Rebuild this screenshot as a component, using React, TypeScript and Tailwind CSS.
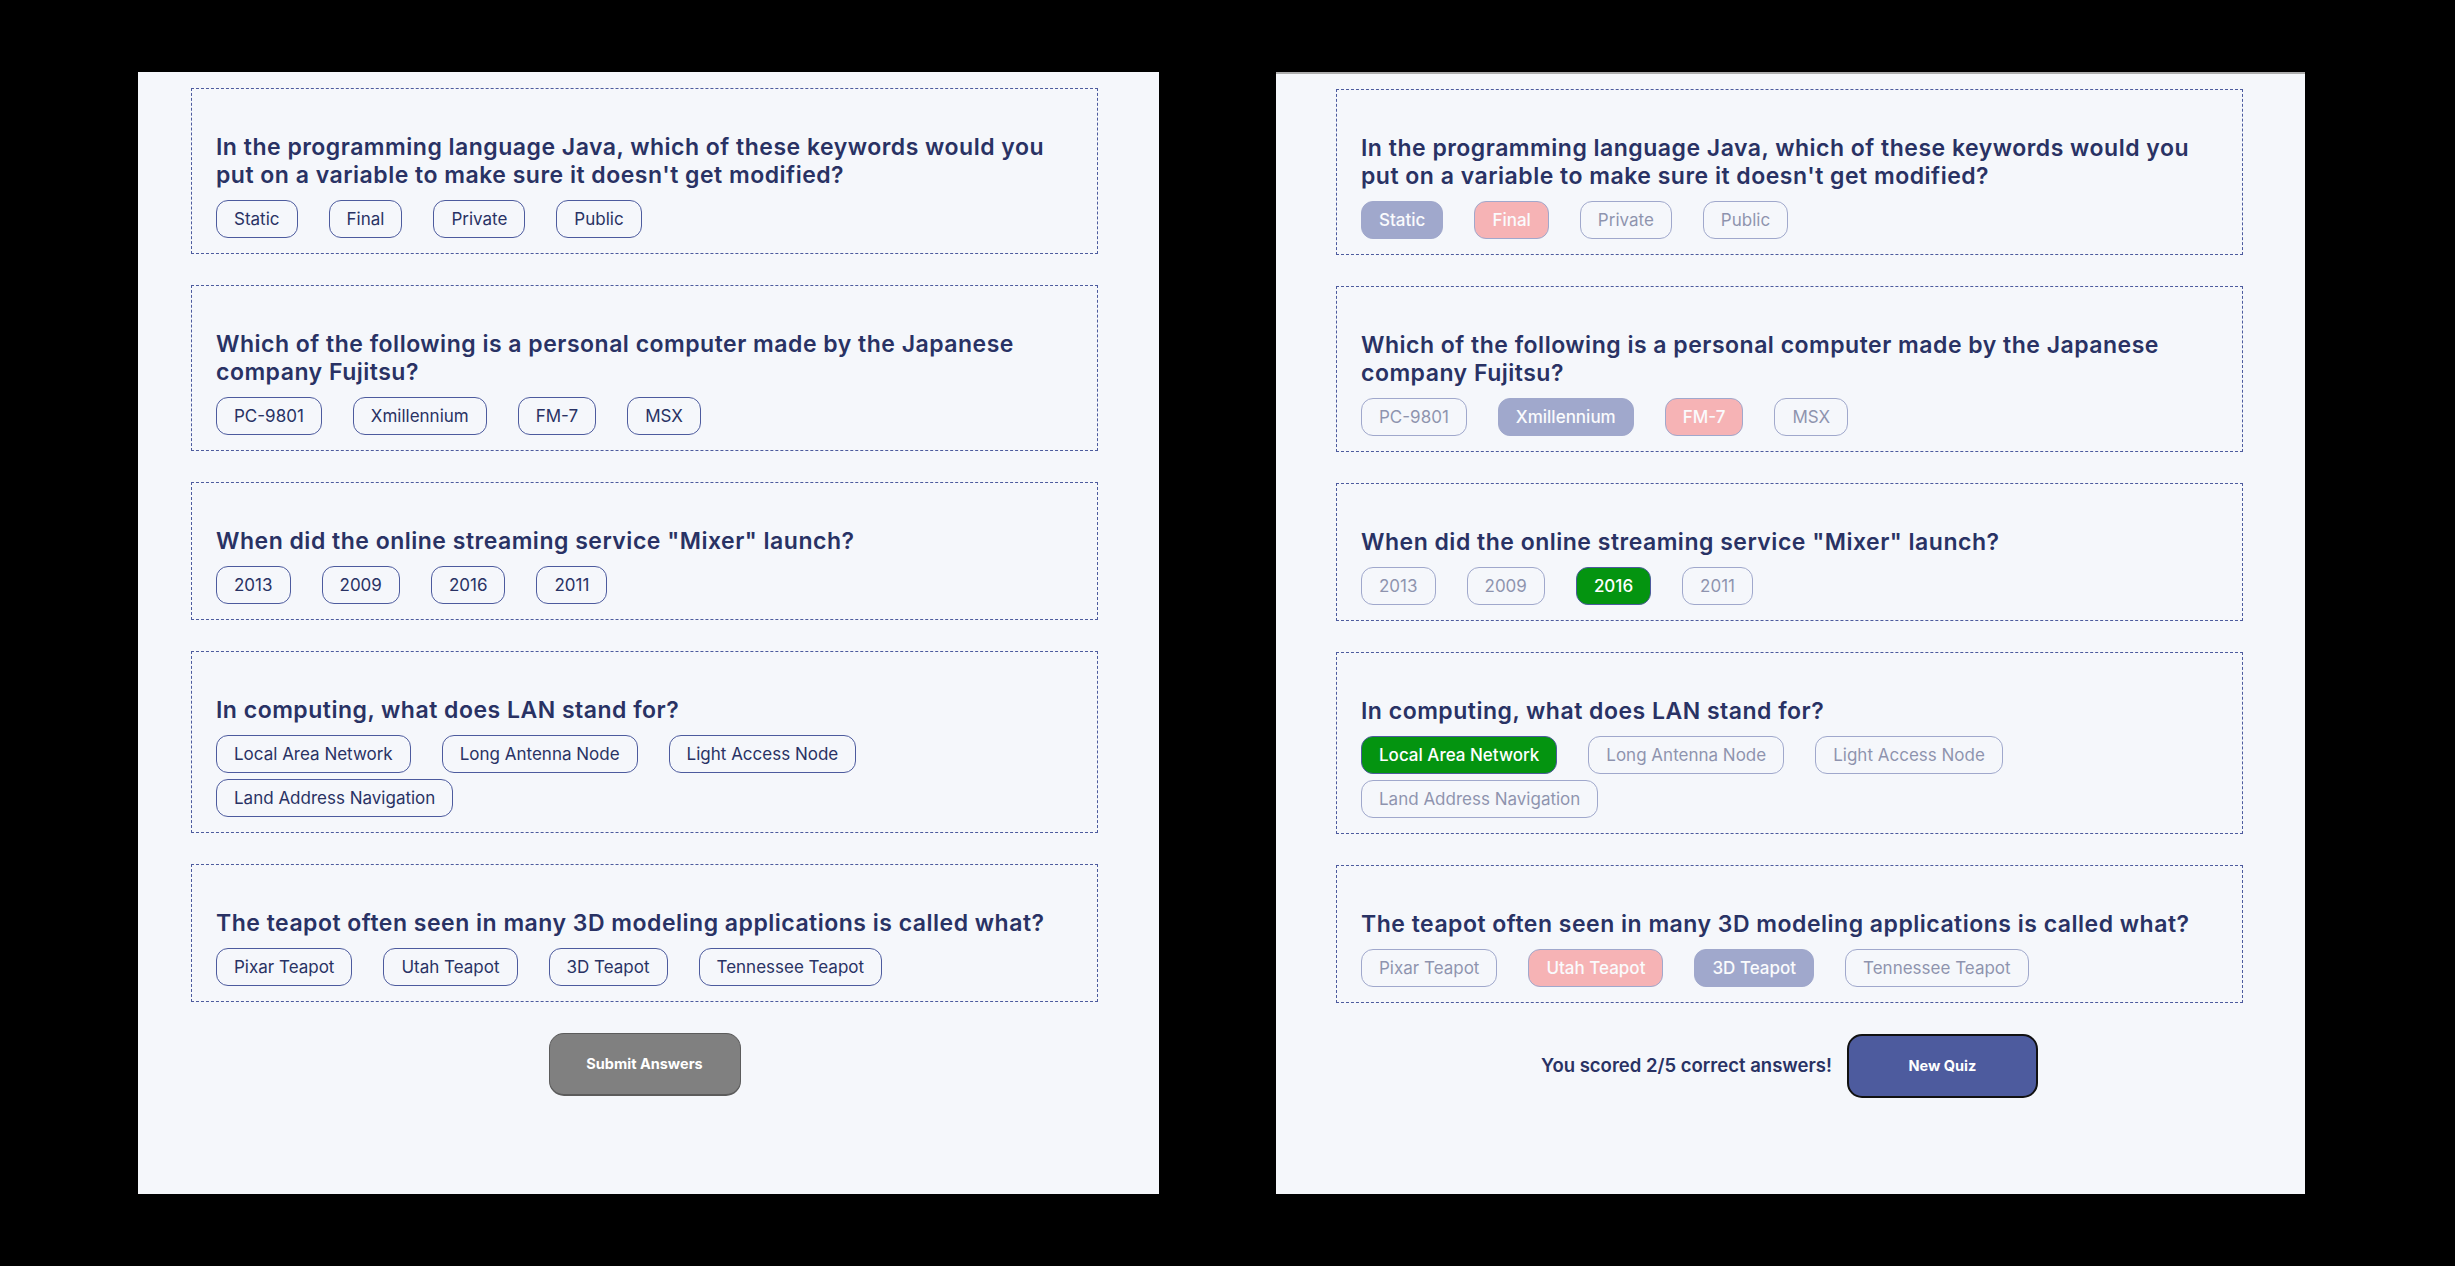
import React from 'react'

type Question = {
  question: string
  answers: string[]
  correct: string
  picked: string
}

const questions: Question[] = [
  {
    question:
      "In the programming language Java, which of these keywords would you put on a variable to make sure it doesn't get modified?",
    answers: ['Static', 'Final', 'Private', 'Public'],
    correct: 'Final',
    picked: 'Static',
  },
  {
    question: 'Which of the following is a personal computer made by the Japanese company Fujitsu?',
    answers: ['PC-9801', 'Xmillennium', 'FM-7', 'MSX'],
    correct: 'FM-7',
    picked: 'Xmillennium',
  },
  {
    question: 'When did the online streaming service "Mixer" launch?',
    answers: ['2013', '2009', '2016', '2011'],
    correct: '2016',
    picked: '2016',
  },
  {
    question: 'In computing, what does LAN stand for?',
    answers: ['Local Area Network', 'Long Antenna Node', 'Light Access Node', 'Land Address Navigation'],
    correct: 'Local Area Network',
    picked: 'Local Area Network',
  },
  {
    question: 'The teapot often seen in many 3D modeling applications is called what?',
    answers: ['Pixar Teapot', 'Utah Teapot', '3D Teapot', 'Tennessee Teapot'],
    correct: 'Utah Teapot',
    picked: '3D Teapot',
  },
]

const font = { fontFamily: 'Inter, "Noto Sans", sans-serif' }

type AnswerState = 'idle' | 'right' | 'wrong' | 'missed' | 'faded'

function AnswerButton({ label, state }: { label: string; state: AnswerState }) {
  const base =
    'h-[38px] px-[17px] rounded-[12px] border text-[17px] leading-[20px] whitespace-nowrap'
  const styles = {
    idle: 'border-[#4D5B9E] text-[#293264] bg-transparent',
    right: 'border-[#4D5B9E] bg-[#049410] text-white font-medium',
    wrong: 'border-[#4D5B9E] bg-[#4D5B9E] text-white font-medium opacity-50',
    missed: 'border-[#4D5B9E] bg-[#F87171] text-white font-medium opacity-50',
    faded: 'border-[#4D5B9E] text-[#293264] bg-transparent opacity-50',
  }
  return <button className={`${base} ${styles[state]}`}>{label}</button>
}

function QuizPanel({ checked }: { checked: boolean }) {
  return (
    <div className="flex flex-col gap-[31px] w-[907px]">
      {questions.map((q) => (
        <div key={q.question} className="border border-dashed border-[#4D5B9E] pt-[44px] pb-[15px] pl-[24px] pr-[30px]">
          <h2 className="text-[23px] leading-[28px] font-semibold text-[#293264] tracking-[0.5px]">{q.question}</h2>
          <div className="flex flex-wrap gap-x-[31px] gap-y-[6px] mt-[11px]">
            {q.answers.map((a) => {
              let state: AnswerState = 'idle'
              if (checked) {
                if (a === q.correct && a === q.picked) state = 'right'
                else if (a === q.picked) state = 'wrong'
                else if (a === q.correct) state = 'missed'
                else state = 'faded'
              }
              return <AnswerButton key={a} label={a} state={state} />
            })}
          </div>
        </div>
      ))}

      {checked ? (
        <div className="flex items-center justify-center gap-[15px]">
          <span className="text-[18.5px] font-semibold text-[#293264]">You scored 2/5 correct answers!</span>
          <button className="w-[191px] h-[64px] rounded-[15px] bg-[#4D5B9E] border-2 border-[#111] text-white text-[14.5px] font-bold">
            New Quiz
          </button>
        </div>
      ) : (
        <div className="flex justify-center">
          <button className="w-[192px] h-[63px] rounded-[15px] bg-[#808080] border border-[#5c5c5c] border-b-2 text-white text-[14.5px] font-bold">
            Submit Answers
          </button>
        </div>
      )}
    </div>
  )
}

export default function App() {
  return (
    <div className="w-[2455px] h-[1266px] bg-black flex items-start pt-[72px] pl-[138px] gap-[117px]" style={font}>
      <div className="w-[1021px] h-[1122px] bg-[#F5F7FB] pt-[16px] pl-[53px]">
        <QuizPanel checked={false} />
      </div>
      <div className="w-[1029px] h-[1122px] bg-[#F5F7FB] border-t-2 border-[#ADADAD] pt-[15px] pl-[60px]">
        <QuizPanel checked={true} />
      </div>
    </div>
  )
}
